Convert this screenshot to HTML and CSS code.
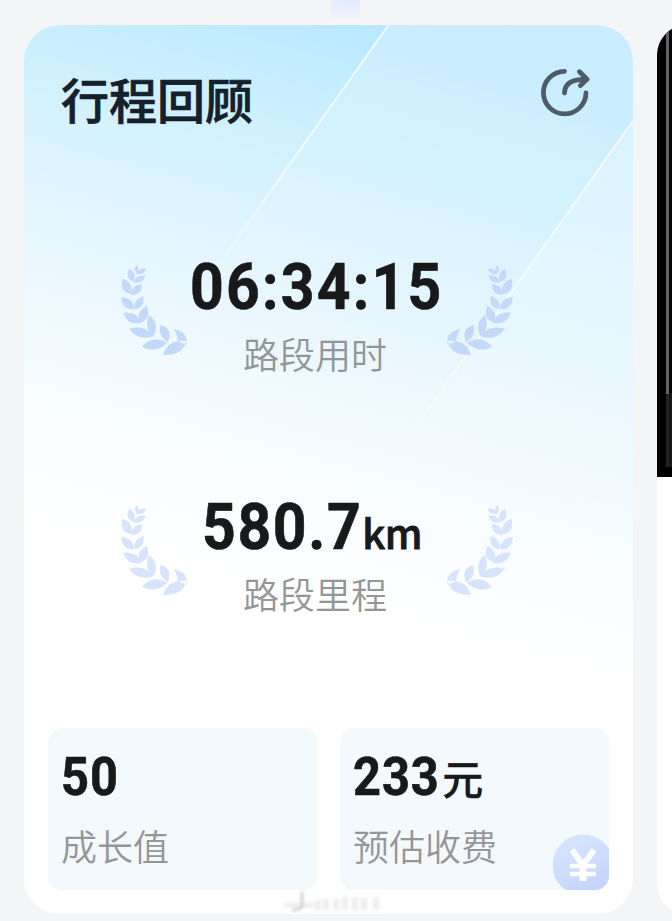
FILE: index.html
```html
<!DOCTYPE html>
<html lang="zh-CN">
<head>
<meta charset="utf-8">
<title>行程回顾</title>
<link rel="stylesheet" href="styles.css">
</head>
<body>
<svg class="defs" width="0" height="0" aria-hidden="true">
  <symbol id="laurel" viewBox="36 72 200 276">
    <path d="M82 74Q72 88 84 103Q95 92 82 74ZM111 86Q88 82 84 103Q106 104 111 86ZM60 86Q46 114 73 126Q86 102 60 86ZM109 107Q80 102 73 127Q102 132 109 107ZM40 116Q30 156 68 163Q74 128 40 116ZM98 133Q64 136 69 165Q99 166 98 133ZM36 171Q38 210 76 208Q72 174 36 171ZM103 168Q68 180 78 208Q108 202 103 168ZM42 218Q56 258 97 248Q86 214 42 218ZM112 197Q74 222 98 247Q128 230 112 197ZM60 266Q86 304 134 289Q108 252 60 266ZM120 225Q102 266 134 287Q152 250 120 225ZM98 320Q138 342 175 308Q130 282 98 320ZM155 254Q144 290 177 306Q192 266 155 254ZM193 267Q205 284 206 302Q218 312 232 312Q238 276 193 267ZM162 345Q176 296 232 303Q222 346 162 345Z"/>
  </symbol>
</svg>
<main class="deck">
  <article class="card">
    <svg class="card-bg" viewBox="0 0 608 888" preserveAspectRatio="none" aria-hidden="true">
      <defs>
        <linearGradient id="sky" gradientUnits="userSpaceOnUse" x1="340" y1="0" x2="190" y2="560">
          <stop offset="0" stop-color="#b9e8ff"/><stop offset=".14" stop-color="#c8eeff"/><stop offset=".33" stop-color="#d9f3fe"/><stop offset=".53" stop-color="#e9f7fe"/><stop offset=".7" stop-color="#f4fbff"/><stop offset=".85" stop-color="#fbfdff"/><stop offset="1" stop-color="#fff"/>
        </linearGradient>
        <linearGradient id="veil" gradientUnits="userSpaceOnUse" x1="400" y1="0" x2="320" y2="400">
          <stop offset="0" stop-color="#fff" stop-opacity=".24"/><stop offset=".5" stop-color="#fff" stop-opacity=".1"/><stop offset="1" stop-color="#fff" stop-opacity="0"/>
        </linearGradient>
        <linearGradient id="veil2" gradientUnits="userSpaceOnUse" x1="608" y1="90" x2="480" y2="500">
          <stop offset="0" stop-color="#fff" stop-opacity=".42"/><stop offset="1" stop-color="#fff" stop-opacity="0"/>
        </linearGradient>
        <linearGradient id="ray" gradientUnits="userSpaceOnUse" x1="364" y1="0" x2="190" y2="245">
          <stop offset="0" stop-color="#fff" stop-opacity=".9"/><stop offset=".65" stop-color="#fff" stop-opacity=".8"/><stop offset="1" stop-color="#fff" stop-opacity="0"/>
        </linearGradient>
        <linearGradient id="ray2" gradientUnits="userSpaceOnUse" x1="608" y1="96" x2="365" y2="438">
          <stop offset="0" stop-color="#fff" stop-opacity=".9"/><stop offset=".6" stop-color="#fff" stop-opacity=".7"/><stop offset="1" stop-color="#fff" stop-opacity="0"/>
        </linearGradient>
      </defs>
      <rect width="608" height="888" fill="#fff"/>
      <path d="M0 0H608V888H0Z" fill="url(#sky)"/>
      <path d="M364 0H608V96L365 438L190 245Z" fill="url(#veil)"/>
      <path d="M608 96L365 438L608 600Z" fill="url(#veil2)"/>
      <path d="M364 0L190 245" stroke="url(#ray)" stroke-width="1.7"/>
      <path d="M608 96L365 438" stroke="url(#ray2)" stroke-width="1.7"/>
    </svg>
    <header class="card-head">
      <h1>行程回顾</h1>
      <svg class="share" viewBox="0 0 50 50" aria-label="分享">
        <path d="M24.5 3.3A21.3 21.3 0 1 0 46 25M24.5 25C24.5 15 32 11.3 45 11.3M39.5 3.8L47 11.3L40.5 17.5"/>
      </svg>
    </header>
    <section class="metric">
      <svg class="laurel"><use href="#laurel"/></svg>
      <div class="reading">
        <div class="value"><span class="digits time">06:34:15</span></div>
        <div class="label">路段用时</div>
      </div>
      <svg class="laurel flip"><use href="#laurel"/></svg>
    </section>
    <section class="metric pale">
      <svg class="laurel"><use href="#laurel"/></svg>
      <div class="reading">
        <div class="value"><span class="digits distance">580.7</span><span class="unit">km</span></div>
        <div class="label">路段里程</div>
      </div>
      <svg class="laurel flip"><use href="#laurel"/></svg>
    </section>
    <section class="tiles">
      <div class="tile"><div class="amount"><span class="digits">50</span></div><div class="label">成长值</div></div>
      <div class="tile">
        <div class="amount"><span class="digits fee">233</span><span class="yuan">元</span></div><div class="label">预估收费</div>
        <svg class="coin" viewBox="0 0 60 60" aria-hidden="true">
          <defs><linearGradient id="coinfill" x1="0" y1="0" x2=".5" y2="1"><stop offset="0" stop-color="#d9e7fe"/><stop offset="1" stop-color="#c4d5fc"/></linearGradient></defs>
          <circle cx="31" cy="31" r="30.5" fill="url(#coinfill)"/>
          <path d="M20 16L31 31L42 16" fill="none" stroke="#fff" stroke-width="6"/>
          <path d="M18 32H44M18 40H44" fill="none" stroke="#fff" stroke-width="4.5"/>
          <path d="M31 29V47" stroke="#fff" stroke-width="7"/>
        </svg>
      </div>
    </section>
    <svg class="smudge" viewBox="0 0 110 28" aria-hidden="true">
      <path d="M22 4V18Q21 22 12 22" fill="none" stroke="#777" stroke-opacity=".6" stroke-width="3"/>
      <path d="M4 17H34" stroke="#888" stroke-opacity=".25" stroke-width="5"/>
      <path d="M38 12V22M46 11V22M56 11V22M65 9V22M75 9V22M84 10V22M96 9V22" stroke="#999" stroke-opacity=".3" stroke-width="6"/>
    </svg>
  </article>
  <aside class="next"><div class="photo"><div class="frame"></div></div></aside>
</main>
<div class="notch"></div>
</body>
</html>
```
FILE: styles.css
```css
* { box-sizing: border-box; }
body {
  margin: 0;
  height: 921px;
  overflow: hidden;
  background: #f4f5f7;
  font-family: "Noto Sans CJK SC", sans-serif;
  color: #18191b;
}
.defs { position: absolute; }
.deck { display: flex; gap: 24px; padding: 25px 0 0 24px; width: 672px; overflow: hidden; }
.card {
  position: relative;
  flex: none;
  width: 609px;
  height: 889px;
  border-radius: 36px;
  overflow: hidden;
  background: #fff;
}
.card-bg { position: absolute; inset: 0; width: 100%; height: 100%; }
.card-head, .metric, .tiles { position: relative; display: flex; }
.card-head {
  justify-content: space-between;
  height: 230px;
  padding: 43px 43px 0 37px;
}
h1 { margin: 2px 0 0; font-size: 48px; line-height: 56px; font-weight: 500; -webkit-text-stroke: .7px #14202a; color: #14202a; }
.share { width: 50px; height: 50px; fill: none; stroke: #4c5d68; stroke-width: 4.8; stroke-linecap: round; stroke-linejoin: round; }
.metric { height: 240px; padding: 0 120px 0 97px; justify-content: space-between; }
.laurel { flex: none; width: 67px; height: 92px; margin-top: 9px; fill: #c2d9fa; }
.pale .laurel { fill: #d8e3fc; }
.flip { transform: scaleX(-1); }
.reading { flex: 1; min-width: 0; padding: 1px 4px 0 0; white-space: nowrap; text-align: center; }
.value { display: flex; justify-content: center; align-items: baseline; height: 79px; font: 700 64px/64px Roboto, sans-serif; }
.digits { display: block; flex: none; transform: scaleX(.92); transform-origin: left; letter-spacing: 2.4px; -webkit-text-stroke: .6px; }
.time { transform-origin: center; margin-left: 3px; }
.distance { margin-right: -16px; letter-spacing: 1.8px; }
.unit { font: 500 40px/40px "Noto Sans CJK SC", sans-serif; margin: 0 6px 0 2px; letter-spacing: -.5px; -webkit-text-stroke: .9px; }
.label { font-size: 36px; line-height: 36px; font-weight: 350; color: #929699; }
.pale .label, .tiles .label { color: #959698; }
.tiles { gap: 23px; padding: 0 24px; margin-top: -7px; }
.tile { position: relative; width: 269px; height: 162px; border-radius: 14px; padding: 23px 13px; overflow: hidden; background: #f3f9fd; }
.amount { display: flex; align-items: baseline; height: 76px; font: 700 53px/53px Roboto, sans-serif; white-space: nowrap; }
.amount .digits { letter-spacing: 1px; }
.fee { margin-right: -8px; }
.yuan { font: 500 41px/41px "Noto Sans CJK SC", sans-serif; margin-left: 3px; -webkit-text-stroke: .3px; }
.coin { position: absolute; right: -3px; bottom: -4px; width: 60px; height: 60px; }
.smudge { position: absolute; left: 256px; bottom: -2px; width: 110px; height: 28px; filter: blur(1.7px); opacity: .55; }
.next { flex: none; width: 60px; height: 889px; border-radius: 36px; overflow: hidden; background: #fff; }
.photo { height: 452px; background: #000; padding-left: 9px; }
.frame { height: 442px; border-left: 3px solid #626164; background: linear-gradient(#050505 368px, #181818 368px); border-image: linear-gradient(#626164 368px, #222 368px) 1; }
.notch { position: absolute; top: 0; left: 331px; width: 29px; height: 19px; background: linear-gradient(#e4eaff, #f2f3fa); }
```
